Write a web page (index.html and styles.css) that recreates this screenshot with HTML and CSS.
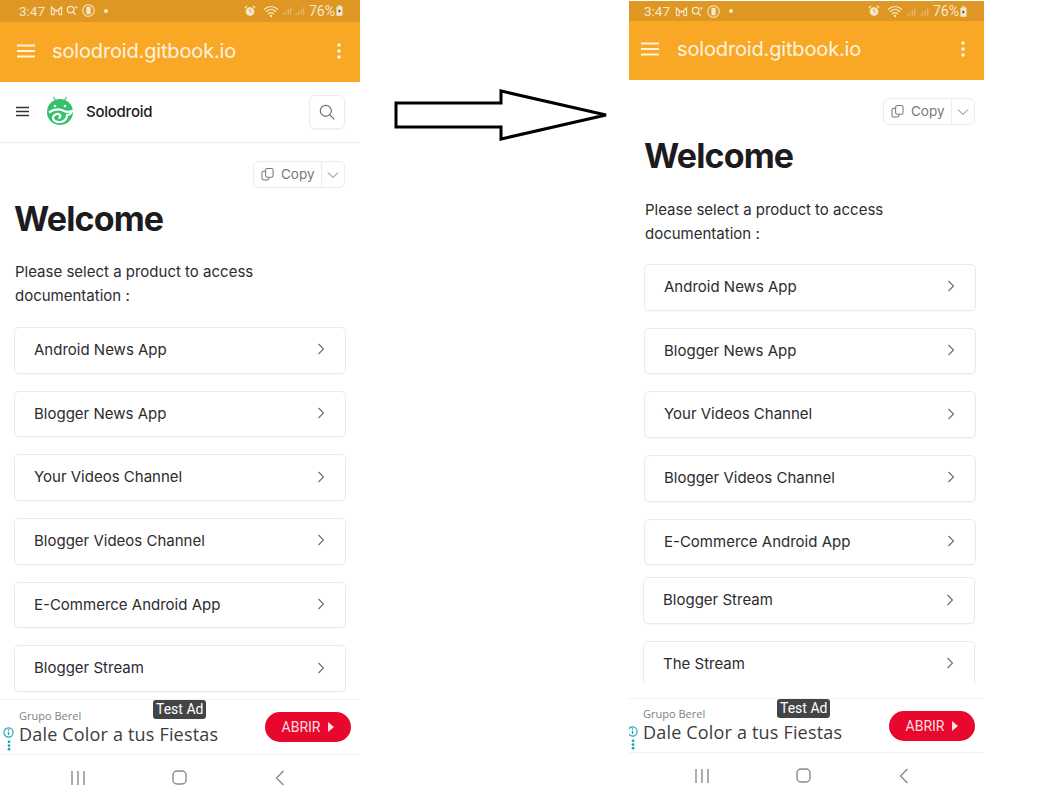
FILE: index.html
```html
<!DOCTYPE html>
<html lang="en">
<head>
<meta charset="utf-8">
<title>Solodroid before and after</title>
<link rel="stylesheet" href="styles.css">
</head>
<body>
<svg class="defs" width="0" height="0" aria-hidden="true">
  <defs>
    <symbol id="i-mail" viewBox="0 0 14 12"><path d="M1.500 10.500V2L7 7l5.500-5v8.500M1.500 10.500h3M9.500 10.500h3M4.500 10.500V5M9.500 10.500V5" fill="none" stroke="currentColor" stroke-width="1.200"/></symbol>
    <symbol id="i-search-star" viewBox="0 0 14 12"><circle cx="5" cy="5" r="3.500" fill="none" stroke="currentColor" stroke-width="1.400"/><path d="M7.500 7.500l3 3" stroke="currentColor" stroke-width="1.400"/><path d="M11 1v3M9.500 2.500h3" stroke="currentColor"/></symbol>
    <symbol id="i-vibrate" viewBox="0 0 14 14"><circle cx="7" cy="7" r="6.200" fill="none" stroke="currentColor" stroke-width="1.100"/><rect x="4.700" y="3" width="4.600" height="8" rx="1" fill="currentColor"/></symbol>
    <symbol id="i-alarm" viewBox="0 0 14 14"><circle cx="7" cy="7.500" r="5" fill="currentColor"/><path d="M7 4.500v3l2 1.500" fill="none" stroke="#DD9722" stroke-width="1.100"/><path d="M1 3.500L3.500 1M13 3.500L10.500 1" stroke="currentColor" stroke-width="1.500"/></symbol>
    <symbol id="i-wifi" viewBox="0 0 16 14"><path d="M1 5.500C5 1.500 11 1.500 15 5.500M3 7.800C6 5 10 5 13 7.800M5 10c2-1.600 4-1.600 6 0" fill="none" stroke="currentColor" stroke-width="1.200"/><circle cx="8" cy="12" r="1.200" fill="currentColor"/></symbol>
    <symbol id="i-signal" viewBox="0 0 12 12"><path d="M1.500 11V9M4.500 11V7M7.500 11V4.500M10.500 11V2" stroke="currentColor" stroke-width="1.100" opacity=".6"/></symbol>
    <symbol id="i-battery" viewBox="0 0 8 12"><path d="M2.500 0h3v1.500h-3z" fill="currentColor"/><rect x="0.500" y="1.500" width="7" height="10.500" rx="1" fill="currentColor"/><path d="M3 4.500l2.500 2L3 8.500z" fill="#333"/></symbol>
    <symbol id="i-menu" viewBox="0 0 18 14"><path d="M0 1.500h18M0 7h18M0 12.500h18" stroke="currentColor" stroke-width="2"/></symbol>
    <symbol id="i-kebab" viewBox="0 0 4 16"><circle cx="2" cy="2" r="1.800" fill="currentColor"/><circle cx="2" cy="8" r="1.800" fill="currentColor"/><circle cx="2" cy="14" r="1.800" fill="currentColor"/></symbol>
    <symbol id="i-copy" viewBox="0 0 14 14"><rect x="5" y="1" width="8" height="9.500" rx="2" fill="none" stroke="currentColor" stroke-width="1.100"/><path d="M5 4H3a2 2 0 0 0-2 2v5.500a2 2 0 0 0 2 2h3.500a2 2 0 0 0 2-2v-1" fill="none" stroke="currentColor" stroke-width="1.100"/></symbol>
    <symbol id="i-down" viewBox="0 0 12 8"><path d="M1 1.500l5 5 5-5" fill="none" stroke="currentColor" stroke-width="1"/></symbol>
    <symbol id="i-right" viewBox="0 0 8 12"><path d="M1.500 1l5 5-5 5" fill="none" stroke="currentColor" stroke-width="1.100"/></symbol>
    <symbol id="i-info" viewBox="0 0 12 12"><circle cx="6" cy="6" r="5" fill="none" stroke="currentColor" stroke-width="1.200"/><path d="M6 5.200v3.600" stroke="currentColor" stroke-width="1.400"/><circle cx="6" cy="3.400" r=".9" fill="currentColor"/></symbol>
    <symbol id="i-dots" viewBox="0 0 4 12"><circle cx="2" cy="2" r="1.500" fill="currentColor"/><circle cx="2" cy="6" r="1.500" fill="currentColor"/><circle cx="2" cy="10" r="1.500" fill="currentColor"/></symbol>
    <symbol id="i-nav-back" viewBox="0 0 10 16"><path d="M8.500 1L1.500 8l7 7" fill="none" stroke="currentColor" stroke-width="1.400"/></symbol>
    <symbol id="i-nav-recent" viewBox="0 0 14 14"><path d="M1 0v14M7 0v14M13 0v14" stroke="currentColor" stroke-width="1.400"/></symbol>
    <symbol id="i-nav-home" viewBox="0 0 15 15"><rect x="1" y="1" width="13" height="13" rx="4" fill="none" stroke="currentColor" stroke-width="1.400"/></symbol>
    <symbol id="i-search" viewBox="0 0 16 16"><circle cx="6.800" cy="6.800" r="5.500" fill="none" stroke="currentColor" stroke-width="1.200"/><path d="M10.800 10.800l4.500 4.500" stroke="currentColor" stroke-width="1.200"/></symbol>
    <symbol id="i-logo" viewBox="0 0 28 30"><path d="M7.500 1l2.500 4.500M20.500 1L18 5.500" stroke="#34C16B" stroke-width="1.200"/><circle cx="14" cy="16" r="13" fill="#34C16B"/><circle cx="9" cy="10" r="1.300" fill="#fff"/><circle cx="19" cy="10" r="1.300" fill="#fff"/><path d="M3 16.500C8 13 14 13 18 15c3 1.500 5 1 8 0-1 3-3 4-5 4 0 3-2 6-6 7-4 .5-8-1-8-4 0-3 4-5 6.500-3.500 1.800 1.200.7 3.500-1 3.300" fill="none" stroke="#fff" stroke-width="2.200"/></symbol>
  </defs>
</svg>

<div class="canvas">
  <section class="phone phone-a">
    <div class="chrome">
      <div class="status">
        <span class="status-time">3:47</span>
        <svg class="ic-13"><use href="#i-mail"/></svg>
        <svg class="ic-13"><use href="#i-search-star"/></svg>
        <svg class="ic-13"><use href="#i-vibrate"/></svg>
        <span class="status-dot"></span>
        <span class="status-fill"></span>
        <svg class="ic-11"><use href="#i-alarm"/></svg>
        <svg class="ic-15"><use href="#i-wifi"/></svg>
        <svg class="ic-sig"><use href="#i-signal"/></svg>
        <svg class="ic-sig"><use href="#i-signal"/></svg>
        <span class="status-pct">76%</span>
        <svg class="ic-bat"><use href="#i-battery"/></svg>
      </div>
      <header class="appbar">
        <svg class="ic-menu"><use href="#i-menu"/></svg>
        <span class="appbar-title">solodroid.gitbook.io</span>
        <svg class="ic-kebab"><use href="#i-kebab"/></svg>
      </header>
    </div>
    <div class="site-header">
      <svg class="ic-site-menu"><use href="#i-menu"/></svg>
      <svg class="logo"><use href="#i-logo"/></svg>
      <span class="site-name">Solodroid</span>
      <span class="search-btn"><svg class="ic-search"><use href="#i-search"/></svg></span>
    </div>
    <main class="doc">
      <div class="copy-row">
        <div class="copy">
          <span class="copy-main"><svg class="ic-copy"><use href="#i-copy"/></svg>Copy</span>
          <span class="copy-more"><svg class="ic-down"><use href="#i-down"/></svg></span>
        </div>
      </div>
      <h1 class="title">Welcome</h1>
      <p class="lead">Please select a product to access documentation :</p>
      <ul class="cards">
        <li class="card">Android News App<svg class="ic-right"><use href="#i-right"/></svg></li>
        <li class="card">Blogger News App<svg class="ic-right"><use href="#i-right"/></svg></li>
        <li class="card">Your Videos Channel<svg class="ic-right"><use href="#i-right"/></svg></li>
        <li class="card">Blogger Videos Channel<svg class="ic-right"><use href="#i-right"/></svg></li>
        <li class="card">E-Commerce Android App<svg class="ic-right"><use href="#i-right"/></svg></li>
        <li class="card">Blogger Stream<svg class="ic-right"><use href="#i-right"/></svg></li>
      </ul>
    </main>
    <div class="chrome">
      <aside class="ad">
        <span class="ad-badge">Test Ad</span>
        <div class="ad-marks">
          <svg class="ic-info"><use href="#i-info"/></svg>
          <svg class="ic-dots"><use href="#i-dots"/></svg>
        </div>
        <div class="ad-copy">
          <span class="ad-brand">Grupo Berel</span>
          <span class="ad-head">Dale Color a tus Fiestas</span>
        </div>
        <span class="ad-cta">ABRIR<span class="ad-caret"></span></span>
      </aside>
      <nav class="navbar">
        <svg class="ic-nav-recent"><use href="#i-nav-recent"/></svg>
        <svg class="ic-nav-home"><use href="#i-nav-home"/></svg>
        <svg class="ic-nav-back"><use href="#i-nav-back"/></svg>
      </nav>
    </div>
  </section>

  <div class="arrow-slot">
    <svg class="arrow" viewBox="0 0 216 54"><path d="M2 14H107V2L212 26 107 50V38H2z" fill="#fff" stroke="#000" stroke-width="3"/></svg>
  </div>

  <section class="phone phone-b">
    <div class="chrome">
      <div class="status">
        <span class="status-time">3:47</span>
        <svg class="ic-13"><use href="#i-mail"/></svg>
        <svg class="ic-13"><use href="#i-search-star"/></svg>
        <svg class="ic-13"><use href="#i-vibrate"/></svg>
        <span class="status-dot"></span>
        <span class="status-fill"></span>
        <svg class="ic-11"><use href="#i-alarm"/></svg>
        <svg class="ic-15"><use href="#i-wifi"/></svg>
        <svg class="ic-sig"><use href="#i-signal"/></svg>
        <svg class="ic-sig"><use href="#i-signal"/></svg>
        <span class="status-pct">76%</span>
        <svg class="ic-bat"><use href="#i-battery"/></svg>
      </div>
      <header class="appbar">
        <svg class="ic-menu"><use href="#i-menu"/></svg>
        <span class="appbar-title">solodroid.gitbook.io</span>
        <svg class="ic-kebab"><use href="#i-kebab"/></svg>
      </header>
    </div>
    <main class="doc">
      <div class="copy-row">
        <div class="copy">
          <span class="copy-main"><svg class="ic-copy"><use href="#i-copy"/></svg>Copy</span>
          <span class="copy-more"><svg class="ic-down"><use href="#i-down"/></svg></span>
        </div>
      </div>
      <h1 class="title">Welcome</h1>
      <p class="lead">Please select a product to access documentation :</p>
      <ul class="cards">
        <li class="card">Android News App<svg class="ic-right"><use href="#i-right"/></svg></li>
        <li class="card">Blogger News App<svg class="ic-right"><use href="#i-right"/></svg></li>
        <li class="card">Your Videos Channel<svg class="ic-right"><use href="#i-right"/></svg></li>
        <li class="card">Blogger Videos Channel<svg class="ic-right"><use href="#i-right"/></svg></li>
        <li class="card">E-Commerce Android App<svg class="ic-right"><use href="#i-right"/></svg></li>
        <li class="card card-added card-first-added">Blogger Stream<svg class="ic-right"><use href="#i-right"/></svg></li>
        <li class="card card-added">The Stream<svg class="ic-right"><use href="#i-right"/></svg></li>
      </ul>
    </main>
    <div class="chrome">
      <aside class="ad">
        <span class="ad-badge">Test Ad</span>
        <div class="ad-marks">
          <svg class="ic-info"><use href="#i-info"/></svg>
          <svg class="ic-dots"><use href="#i-dots"/></svg>
        </div>
        <div class="ad-copy">
          <span class="ad-brand">Grupo Berel</span>
          <span class="ad-head">Dale Color a tus Fiestas</span>
        </div>
        <span class="ad-cta">ABRIR<span class="ad-caret"></span></span>
      </aside>
      <nav class="navbar">
        <svg class="ic-nav-recent"><use href="#i-nav-recent"/></svg>
        <svg class="ic-nav-home"><use href="#i-nav-home"/></svg>
        <svg class="ic-nav-back"><use href="#i-nav-back"/></svg>
      </nav>
    </div>
  </section>
</div>
</body>
</html>
```

FILE: styles.css
```css
* { box-sizing: border-box; }

html, body {
  margin: 0;
  height: 100%;
  background: #fff;
  overflow: hidden;
}

body {
  font-family: Inter, "Liberation Sans", sans-serif;
  color: #1c1c1e;
}

.defs { display: block; height: 0; }

.canvas {
  display: flex;
  align-items: flex-start;
  width: 1061px;
  height: 800px;
}

.phone {
  display: flex;
  flex-direction: column;
  flex: none;
  background: #fff;
  overflow: hidden;
}

.phone-a { width: 360px; height: 800px; }
.phone-b { width: 355px; height: 799px; margin-top: 1px; }

.arrow-slot {
  flex: none;
  width: 269px;
  padding: 89px 0 0 34px;
}

.arrow { display: block; width: 216px; height: 54px; }

/* Chrome strips keep the 360px phone width; the second shot is cropped on its left */
.chrome { flex: none; width: 360px; }
.phone-b .chrome { margin-left: -5px; }

.status {
  display: flex;
  align-items: center;
  gap: 3px;
  height: 22px;
  padding: 0 17px 1px 19px;
  background: #DD9722;
  color: #F6E8CC;
  font: 400 13.500px Roboto, sans-serif;
}
.phone-b .status { height: 20px; padding-left: 20px; padding-top: 1px; }

.status-time { margin-right: 2px; }
.status-dot {
  width: 4px;
  height: 4px;
  margin-left: 6px;
  border-radius: 50%;
  background: #F6E8CC;
}
.status-fill { flex: 1; }
.status-pct { margin-left: 1px; font-size: 14px; }

.ic-13 { width: 13px; height: 13px; }
.ic-11 { width: 12px; height: 12px; margin-right: 4px; }
.ic-15 { width: 16px; height: 14px; }
.ic-sig { width: 10px; height: 11px; }
.ic-bat { width: 7px; height: 11px; margin-left: -2px; }

.appbar {
  display: flex;
  align-items: center;
  height: 60px;
  padding: 0 19px 3px 17px;
  background: #F9A825;
  color: #FDF3E0;
}
.phone-b .appbar { height: 59px; }

.ic-menu { width: 18px; height: 14px; }
.ic-kebab { width: 4px; height: 16px; }

.appbar-title {
  flex: 1;
  margin-left: 17px;
  font: 400 20px Inter, sans-serif;
  letter-spacing: -.15px;
}
.phone-b .appbar-title { margin-left: 18px; }

.site-header {
  display: flex;
  flex: none;
  align-items: center;
  height: 61px;
  padding: 0 15px 2px 16px;
  border-top: 1px solid #fff;
  border-bottom: 1px solid #EEEEF0;
  margin-bottom: -1px;
}

.ic-site-menu { width: 13px; height: 11px; color: #333; }
.logo { width: 28px; height: 30px; margin: -2px 0 0 17px; }
.site-name {
  flex: 1;
  margin-left: 12px;
  font-size: 15px;
  font-weight: 500;
  letter-spacing: -.25px;
}

.search-btn {
  display: flex;
  align-items: center;
  justify-content: center;
  width: 36px;
  height: 34px;
  border: 1px solid #EDEDEF;
  border-radius: 6px;
  box-shadow: 0 1px 2px rgba(0, 0, 0, .06);
  color: #6c6c70;
}
.ic-search { width: 16px; height: 16px; }

.doc {
  flex: 1;
  min-height: 0;
  overflow: hidden;
  padding: 19px 14px 0;
}
.phone-b .doc {
  flex: none;
  height: 604px;
  padding: 18px 8px 0 15px;
  margin-bottom: 14px;
}

.copy-row { display: flex; justify-content: flex-end; padding-right: 1px; }

.copy {
  display: flex;
  height: 27px;
  border: 1px solid #ECECEE;
  border-radius: 6px;
  color: #77777b;
  font-size: 13.500px;
}

.copy-main {
  display: flex;
  align-items: center;
  gap: 7px;
  width: 68px;
  padding: 0 0 1px 7px;
  border-right: 1px solid #ECECEE;
}

.copy-more {
  display: flex;
  align-items: center;
  justify-content: center;
  width: 22px;
  color: #77777b;
}

.ic-copy { width: 13px; height: 14px; }
.ic-down { width: 12px; height: 8px; }

.title {
  margin: 10px 0 0;
  font-size: 34px;
  font-weight: 700;
  line-height: 42px;
  letter-spacing: -.85px;
}

.lead {
  width: 280px;
  margin: 20px 0 0 1px;
  font-size: 15px;
  line-height: 24px;
  color: #2c2c2e;
}
.phone-b .lead { margin-top: 21px; }

.cards {
  display: flex;
  flex-direction: column;
  gap: 17px;
  margin: 19px 0 0;
  padding: 0;
  list-style: none;
}
.phone-b .cards { margin-top: 18px; }

.card {
  display: flex;
  flex: none;
  align-items: center;
  justify-content: space-between;
  width: 332px;
  height: 46.700px;
  padding: 0 20px 2px 19px;
  border: 1px solid #EAEAEC;
  border-radius: 5px;
  box-shadow: 0 1px 1px rgba(0, 0, 0, .03);
  font-size: 15px;
  color: #2c2c2e;
}

.card-added { margin-left: -1px; }
.card-first-added { margin-top: -5px; }

.ic-right { width: 8px; height: 12px; color: #6c6c70; }

.ad {
  position: relative;
  display: flex;
  align-items: center;
  height: 56px;
  padding: 0 9px 0 3px;
  border: 1px solid #F1F1F2;
  border-width: 1px 0;
}
.phone-b .ad { height: 55px; }

.ad-badge {
  position: absolute;
  top: 0;
  left: 153px;
  padding: 1px 3px;
  border-radius: 3px;
  background: #444;
  color: #fff;
  font: 400 14px/17px Roboto, sans-serif;
}

.ad-marks {
  display: flex;
  flex-direction: column;
  align-items: center;
  gap: 2px;
  width: 11px;
  margin: 24px 0 0;
  color: #1BA3B4;
}
.ic-info { width: 11px; height: 11px; }
.ic-dots { width: 4px; height: 11px; }

.ad-copy {
  display: flex;
  flex: 1;
  flex-direction: column;
  margin: 0 0 0 5px;
  font-family: "Open Sans", sans-serif;
}
.phone-b .ad-copy { margin-top: -2px; }
.ad-brand { font-size: 11px; line-height: 15px; color: #808080; }
.ad-head { font-size: 18px; line-height: 23px; color: #3c3c3c; letter-spacing: .18px; }

.ad-cta {
  display: flex;
  align-items: center;
  justify-content: center;
  gap: 8px;
  width: 86px;
  height: 30px;
  border-radius: 15px;
  background: #E8082D;
  color: #fbdde2;
  font: 400 14px Roboto, sans-serif;
}

.ad-caret {
  width: 0;
  height: 0;
  border-style: solid;
  border-width: 5px 0 5px 6px;
  border-color: transparent transparent transparent #fbdde2;
}

.navbar {
  display: flex;
  align-items: center;
  height: 45px;
  color: #8a8a8e;
}

.ic-nav-recent { width: 14px; height: 14px; margin-left: 71px; }
.ic-nav-home { width: 15px; height: 15px; margin-left: 87px; }
.ic-nav-back { width: 10px; height: 16px; margin-left: 88px; }
```
